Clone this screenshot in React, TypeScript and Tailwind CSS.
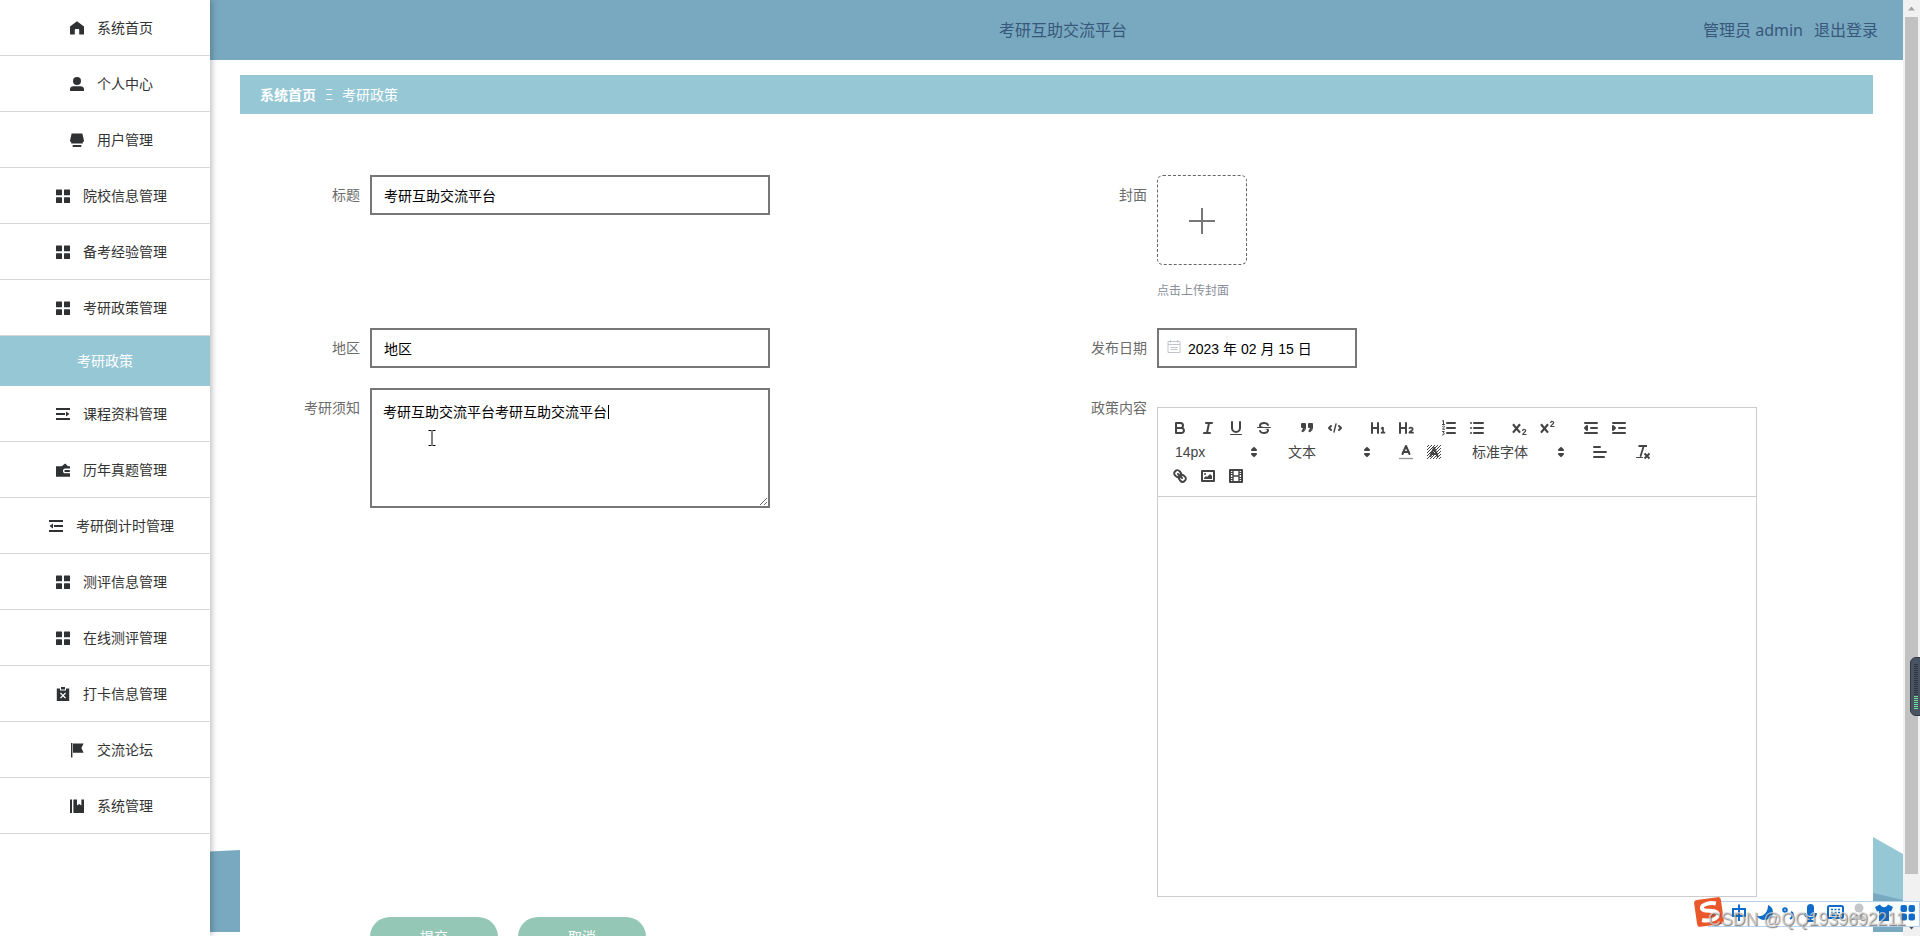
import type { ReactNode } from "react";

/* ── Sidebar icons, drawn on a 14px grid ─────────────────────────── */

const ICONS: Record<string, ReactNode> = {
  home: <path d="M7 0.2L0 5.6V13.6H4.8V9C4.8 8.4 5.2 8 5.700 8H8.300C8.800 8 9.200 8.400 9.200 9V13.600H14V5.600Z" />,
  user: (
    <>
      <circle cx="7" cy="4" r="4" />
      <path d="M0 14V12.300C0 10.400 1.400 9.200 3.400 9.200H10.600C12.600 9.200 14 10.400 14 12.300V14Z" />
    </>
  ),
  shop: (
    <>
      <path d="M1.600 0.500H12.400L14 7.800C13.900 8.700 13.400 9 12.800 9V10.600H1.200V9C0.600 9 0.100 8.700 0 7.800Z" />
      <path d="M2.600 12H11.400V13C11.400 13.500 11.100 14 10.400 14H3.600C2.900 14 2.600 13.500 2.600 13Z" />
    </>
  ),
  grid: (
    <>
      <rect x="0" y="0.400" width="6" height="5.800" rx="0.500" />
      <rect x="8" y="0.400" width="6" height="5.800" rx="0.500" />
      <rect x="0" y="8.200" width="6" height="5.800" rx="0.500" />
      <rect x="8" y="8.200" width="6" height="5.800" rx="0.500" />
    </>
  ),
  unfold: <path d="M0 1H14V3H0ZM0 6H9V8H0ZM10 4.500L13.500 7L10 9.500ZM0 11H14V13H0Z" />,
  fold: <path d="M0 1H14V3H0ZM5 6H14V8H5ZM4 4.500L0.500 7L4 9.500ZM0 11H14V13H0Z" />,
  wallet: (
    <path d="M0 3.200H5.600L9.200 0.400L12 3.200H14V5.600H9.400C7.600 5.600 7 6.900 7 8C7 9.400 7.800 10.300 9.400 10.300H14V13.800H0ZM9.400 7H13.800V9H9.400C8.600 9 8.400 8.500 8.400 8S8.600 7 9.400 7Z" />
  ),
  release: (
    <path
      fillRule="evenodd"
      d="M0.800 1.600H4V3.400H10V1.600H13.200V14H0.800ZM5 0H9V2.400H5ZM4.900 5.600L4 6.500L6.100 8.600L4 10.700L4.900 11.600L7 9.500L9.100 11.600L10 10.700L7.900 8.600L10 6.500L9.100 5.600L7 7.700Z"
    />
  ),
  flag: <path d="M1 0H2.400V14.600H1ZM3 0.600H13.600L11.400 5.100L13.600 9.800H3Z" />,
  books: <path d="M0 0.400H2V14H0ZM3.400 0.400H7V6.600L9.200 5L11.400 6.600V0.400H14V14H3.400Z" />,
};

const MENU = [
  { icon: "home", label: "系统首页" },
  { icon: "user", label: "个人中心" },
  { icon: "shop", label: "用户管理" },
  { icon: "grid", label: "院校信息管理" },
  { icon: "grid", label: "备考经验管理" },
  { icon: "grid", label: "考研政策管理", child: "考研政策" },
  { icon: "unfold", label: "课程资料管理" },
  { icon: "wallet", label: "历年真题管理" },
  { icon: "fold", label: "考研倒计时管理" },
  { icon: "grid", label: "测评信息管理" },
  { icon: "grid", label: "在线测评管理" },
  { icon: "release", label: "打卡信息管理" },
  { icon: "flag", label: "交流论坛" },
  { icon: "books", label: "系统管理" },
];

function Sidebar() {
  return (
    <aside className="relative z-10 w-[210px] shrink-0 bg-white shadow-[2px_0_6px_rgba(0,0,0,0.25)]">
      <ul>
        {MENU.map((m) => (
          <li key={m.label}>
            <div className="flex h-14 items-center justify-center gap-[13px] border-b border-[#d6d6d6] pl-[13px] text-[#333]">
              <svg className="h-3.5 w-3.5 shrink-0 overflow-visible" viewBox="0 0 14 14" fill="#303133">
                {ICONS[m.icon]}
              </svg>
              <span>{m.label}</span>
            </div>
            {m.child && (
              <div className="flex h-[50px] items-center justify-center bg-[#96c7d5] text-white">{m.child}</div>
            )}
          </li>
        ))}
      </ul>
    </aside>
  );
}

/* ── Rich text editor toolbar ────────────────────────────────────── */

function Tool({ children }: { children: ReactNode }) {
  return (
    <button className="flex h-6 w-7 items-center justify-center">
      <svg
        className="h-[18px] w-[18px]"
        viewBox="0 0 18 18"
        fill="none"
        stroke="#444"
        strokeWidth="2"
        strokeLinecap="round"
        strokeLinejoin="round"
      >
        {children}
      </svg>
    </button>
  );
}

function Group({ children }: { children: ReactNode }) {
  return <span className="mr-[15px] flex">{children}</span>;
}

function Picker({ label, className }: { label: string; className: string }) {
  return (
    <span className={`mr-[15px] flex h-6 items-center justify-between pl-[9px] pr-px text-[#444] ${className}`}>
      {label}
      <svg className="h-[18px] w-[18px]" viewBox="0 0 18 18" fill="#444" stroke="#444" strokeWidth="2" strokeLinejoin="round">
        <polygon points="7 11 9 13 11 11 7 11" />
        <polygon points="7 7 9 5 11 7 7 7" />
      </svg>
    </span>
  );
}

const solid = { fill: "#444", stroke: "none" };

// Diagonal hatch behind the letter of the background colour tool
const HATCH = [-14, -11, -8, -5, -2, 1, 4, 7, 10, 13];

function Toolbar() {
  return (
    <div className="h-[89px] border-b border-[#ccc] p-2">
      <div className="flex">
        <Group>
          <Tool>
            <path d="M5,4H9.5A2.5,2.5,0,0,1,12,6.5v0A2.5,2.5,0,0,1,9.5,9H5A0,0,0,0,1,5,9V4A0,0,0,0,1,5,4Z" />
            <path d="M5,9h5.5A2.5,2.5,0,0,1,13,11.5v0A2.5,2.5,0,0,1,10.5,14H5a0,0,0,0,1,0,0V9A0,0,0,0,1,5,9Z" />
          </Tool>
          <Tool>
            <path d="M7 4H13M5 14H11M8 14L10 4" />
          </Tool>
          <Tool>
            <path d="M5,3V9a4.012,4.012,0,0,0,4,4H9a4.012,4.012,0,0,0,4-4V3" />
            <rect {...solid} x="3" y="15" width="12" height="1" rx="0.5" />
          </Tool>
          <Tool>
            <path strokeWidth="1" d="M15.5 8.5H2.5" />
            <path
              {...solid}
              d="M9.007,8C6.542,7.791,6,7.519,6,6.5,6,5.792,7.283,5,9,5c1.571,0,2.765.679,2.969,1.309a1,1,0,0,0,1.9-.617C13.356,4.106,11.354,3,9,3,6.2,3,4,4.538,4,6.5a3.2,3.2,0,0,0,.5,1.843Z"
            />
            <path
              {...solid}
              d="M8.984,10C11.457,10.208,12,10.479,12,11.5c0,0.708-1.283,1.5-3,1.5-1.571,0-2.765-.679-2.969-1.309a1,1,0,1,0-1.9.617C4.644,13.894,6.646,15,9,15c2.8,0,5-1.538,5-3.5a3.2,3.2,0,0,0-.5-1.843Z"
            />
          </Tool>
        </Group>
        <Group>
          <Tool>
            <rect fill="#444" x="4" y="5" width="3" height="3" />
            <rect fill="#444" x="11" y="5" width="3" height="3" />
            <path {...solid} d="M7,8c0,4.031-3,5-3,5l-.8-1.2S5,11,5,8Z" />
            <path {...solid} d="M14,8c0,4.031-3,5-3,5l-.8-1.2S12,11,12,8Z" />
            <path strokeWidth="1.2" d="M7.4 8c0 3.5-2.8 4.6-2.8 4.6M14.4 8c0 3.5-2.8 4.6-2.8 4.6" />
          </Tool>
          <Tool>
            <polyline points="5 7 3 9 5 11" />
            <polyline points="13 7 15 9 13 11" />
            <line strokeWidth="1.4" x1="10" x2="8" y1="5" y2="13" />
          </Tool>
        </Group>
        <Group>
          <Tool>
            <path d="M3 4V14M9 4V14M3 9H9" />
            <path strokeWidth="1.700" strokeLinecap="butt" d="M12 9.800L14 8.600V14M11.800 13.600H16.200" />
          </Tool>
          <Tool>
            <path d="M3 4V14M9 4V14M3 9H9" />
            <path strokeWidth="1.700" strokeLinecap="butt" d="M12 9.600C12.600 8.200 15.800 8.200 15.800 10C15.800 11.400 13 12.200 12.400 13.600H16.800" />
          </Tool>
        </Group>
        <Group>
          <Tool>
            <path d="M7 4H15M7 9H15M7 14H15" />
            <path strokeWidth="1" d="M2.5 1.9L3.5 1.5V5.5M2.5 5.5H4.5M2.5 7.4C3 6.6 4.6 6.8 4.5 7.8C4.4 8.6 2.5 9.6 2.5 10.2H4.6M2.5 12.5H4.2L3.3 14C4.6 14 4.9 15.9 2.5 16" />
          </Tool>
          <Tool>
            <path d="M6 4H15M6 9H15M6 14H15M3 4H3M3 9H3M3 14H3" />
          </Tool>
        </Group>
        <Group>
          <Tool>
            <path strokeWidth="2.2" strokeLinecap="butt" d="M2 5.200L9 13.600M9 5.200L2 13.600" />
            <path strokeWidth="1.2" d="M11.7 11.5C12.2 10 14.8 10.2 14.6 11.8C14.4 13.1 11.9 14.2 11.7 15.5H15" />
          </Tool>
          <Tool>
            <path strokeWidth="2.2" strokeLinecap="butt" d="M2 5.200L9 13.600M9 5.200L2 13.600" />
            <path strokeWidth="1.2" d="M11.7 3.5C12.2 2 14.8 2.2 14.6 3.8C14.4 5.1 11.9 6.2 11.7 7.5H15" />
          </Tool>
        </Group>
        <Group>
          <Tool>
            <path d="M3 14H15M3 4H15M9 9H15" />
            <polyline fill="#444" points="5 7 5 11 3 9 5 7" />
          </Tool>
          <Tool>
            <path d="M3 14H15M3 4H15M9 9H15" />
            <polyline fill="#444" points="3 7 3 11 5 9 3 7" />
          </Tool>
        </Group>
      </div>

      <div className="flex">
        <Picker label="14px" className="w-[98px]" />
        <Picker label="文本" className="w-[98px]" />
        <Group>
          <Tool>
            <path stroke="#999" strokeWidth="1.4" strokeLinecap="butt" d="M2 15.5H16" />
            <polyline points="5.5 11 9 3 12.5 11" />
            <path d="M6.4 9H11.6" />
          </Tool>
          <Tool>
            <clipPath id="hatch-box">
              <rect x="2" y="2" width="14" height="14" />
            </clipPath>
            <g clipPath="url(#hatch-box)" strokeWidth="1">
              {HATCH.map((x) => (
                <line key={x} x1={x} y1="17" x2={x + 16} y2="1" />
              ))}
            </g>
            <polyline points="5.5 13 9 5 12.5 13" />
            <path d="M6.4 11H11.6" />
          </Tool>
        </Group>
        <Picker label="标准字体" className="w-[108px]" />
        <Group>
          <Tool>
            <path d="M3 9H15M3 14H13M3 4H9" />
          </Tool>
        </Group>
        <Group>
          <Tool>
            <path strokeLinecap="butt" d="M4.500 3H13" />
            <path strokeWidth="1.8" d="M6.600 13L9.4 4" />
            <path strokeLinecap="butt" d="M10.500 10.500L15.500 15.500M15.500 10.500L10.500 15.500" />
            <rect {...solid} x="2" y="14" width="7" height="1" rx="0.5" />
          </Tool>
        </Group>
      </div>

      <div className="flex">
        <Tool>
          <line x1="7" x2="11" y1="7" y2="11" />
          <path d="M8.9,4.577a3.476,3.476,0,0,1,.36,4.679A3.476,3.476,0,0,1,4.577,8.9C3.185,7.5,2.035,6.4,4.217,4.217S7.5,3.185,8.9,4.577Z" />
          <path d="M13.423,9.1a3.476,3.476,0,0,0-4.679-.36,3.476,3.476,0,0,0,.36,4.679c1.392,1.392,2.5,2.542,4.679.36S14.815,10.5,13.423,9.1Z" />
        </Tool>
        <Tool>
          <rect x="3" y="4" width="12" height="10" />
          <circle {...solid} cx="6" cy="7" r="1" />
          <polyline {...solid} points="5 12 5 11 7 9 8 10 11 7 13 9 13 12 5 12" />
        </Tool>
        <Tool>
          <rect x="3" y="3" width="12" height="12" />
          <path strokeWidth="1.4" strokeLinecap="butt" d="M6 3V15M12 3V15M6 9H12" />
          <path strokeWidth="1" strokeLinecap="butt" d="M3 5.5H6M3 7.5H6M3 10.5H6M3 12.5H6M12 5.5H15M12 7.5H15M12 10.5H15M12 12.5H15" />
        </Tool>
      </div>
    </div>
  );
}

/* ── Form ────────────────────────────────────────────────────────── */

function Field({ label, children }: { label: string; children: ReactNode }) {
  return (
    <div className="flex w-[787px] shrink-0">
      <label className="mr-2.5 h-10 w-[120px] shrink-0 text-right leading-10 text-[#6b6b6b]">{label}</label>
      {children}
    </div>
  );
}

function PolicyForm() {
  return (
    <form className="pt-[61px]">
      <div className="flex h-[153px]">
        <Field label="标题">
          <input className="h-10 w-[400px] border-2 border-[#777] px-3 text-black" defaultValue="考研互助交流平台" />
        </Field>
        <Field label="封面">
          <div>
            <div className="flex h-[90px] w-[90px] items-center justify-center rounded-md border border-dashed border-[#666] pr-px pt-0.5">
              <svg className="h-[26px] w-[26px]" viewBox="0 0 26 26" stroke="#777" strokeWidth="2">
                <path d="M13 0V26M0 13H26" />
              </svg>
            </div>
            <p className="mt-[18px] text-xs leading-4 text-[#888e99]">点击上传封面</p>
          </div>
        </Field>
      </div>

      <div className="flex h-[60px]">
        <Field label="地区">
          <input className="h-10 w-[400px] border-2 border-[#777] px-3 text-black" defaultValue="地区" />
        </Field>
        <Field label="发布日期">
          <div className="flex h-10 w-[200px] items-center border-2 border-[#777] pl-2 pt-px text-black">
            <svg className="mb-1 mr-[7px] h-3.5 w-3.5" viewBox="0 0 14 14" fill="none" stroke="#c0c4cc">
              <path d="M1 1.5H13V12.5H1ZM1 4.5H13M3.5 0V2.5M10.5 0V2.5M3.5 7.5H10.5M3.5 9.5H10.5" />
            </svg>
            2023 年 02 月 15 日
          </div>
        </Field>
      </div>

      <div className="flex h-[529px]">
        <Field label="考研须知">
          <div className="relative h-[120px]">
            <textarea
              className="h-[120px] w-[400px] resize border-2 border-[#777] px-[11px] py-3 leading-[21px] text-black"
              defaultValue="考研互助交流平台考研互助交流平台"
            />
            {/* text caret and mouse pointer */}
            <span className="absolute left-[238px] top-[17px] h-[14px] w-px bg-black" />
            <svg className="absolute left-[58px] top-[42px] h-4 w-2" viewBox="0 0 8 16" fill="none" stroke="#000">
              <path d="M0.5 0.5H3.5M4.5 0.5H7.5M4 1V15M0.5 15.5H3.5M4.5 15.5H7.5" />
            </svg>
          </div>
        </Field>
        <Field label="政策内容">
          <div className="mt-[19px] h-[490px] w-[600px] border border-[#ccc]">
            <Toolbar />
          </div>
        </Field>
      </div>

      <div className="ml-[130px] flex gap-5">
        <button className="h-10 w-32 shrink-0 rounded-[20px] bg-[#94c7b5] text-white">提交</button>
        <button className="h-10 w-32 shrink-0 rounded-[20px] bg-[#94c7b5] text-white">取消</button>
      </div>
    </form>
  );
}

/* ── Desktop overlays ────────────────────────────────────────────── */

function ImeBar() {
  return (
    <div className="absolute left-[1694px] top-[897px] z-30 h-[31px] w-[226px]">
      <div className="absolute left-[14px] top-1 h-[26px] w-[212px] border border-[#b5d3ee] bg-white/95" />
      <svg className="absolute inset-0 h-[31px] w-[226px]" viewBox="0 0 226 31" fill="none">
        <g transform="rotate(-8 15 15)">
          <rect x="1.500" y="1.500" width="27" height="27" rx="3" fill="#e9572b" />
          <path
            d="M23 7.500C18 5.600 8.500 6 8.500 10.300C8.500 15 23.500 12.500 23.500 18.600C23.500 23.600 12.500 24.300 7 22"
            stroke="#fff"
            strokeWidth="4"
          />
        </g>
        <g stroke="#0f6cc9" strokeWidth="2">
          <path d="M39 12H51V19H39ZM45 7.500V24" />
          <circle cx="91" cy="13" r="1.800" />
          <path d="M97 15C99.500 16 99.500 20 96 22" />
          <path d="M111 16C111 22.500 122 22.500 122 16M116.500 21V24M113 24H120" />
          <rect x="134" y="9" width="15" height="12" rx="1.500" />
          <path strokeWidth="1.500" d="M137 12.500H139M140.500 12.500H142.500M144 12.500H146M137 15.500H139M140.500 15.500H142.500M144 15.500H146M138 18.500H145" />
        </g>
        <g fill="#0f6cc9">
          <path d="M74 8C82 11 80 23 70 23C67 23 64 21 63 19C69 20 74 16 74 8Z" />
          <rect x="113" y="7" width="7" height="12" rx="3.500" />
          <path d="M181 10L186 7.500C188 11 192 11 194 7.500L199 10L197 14.500L195 14V24H185V14L183 14.500Z" />
          <rect x="206.500" y="8" width="6.500" height="7" rx="2" />
          <rect x="214.500" y="8" width="6.500" height="7" rx="2" />
          <rect x="206.500" y="16.500" width="6.500" height="7" rx="2" />
          <rect x="214.500" y="16.500" width="6.500" height="7" rx="2" />
        </g>
        <g fill="#c4c6c9">
          <circle cx="165" cy="11" r="4.500" />
          <path d="M158 23C158 16 172 16 172 23Z" />
        </g>
      </svg>
      <span className="absolute left-[14px] top-[10px] whitespace-nowrap font-['Liberation_Sans',sans-serif] text-[17.7px] leading-6 text-[#dcdcdc]/70 [text-shadow:1px_1px_1px_rgba(80,80,80,0.75)]">
        CSDN @QQ1939692211
      </span>
    </div>
  );
}

function Scrollbar() {
  return (
    <div className="flex w-[17px] shrink-0 flex-col items-center justify-between bg-[#f1f1f1]">
      <svg className="h-[17px] w-[17px]" viewBox="0 0 17 17" fill="#a3a3a3">
        <path d="M8.5 6.5L12 10.5H5Z" />
      </svg>
      <div className="mb-auto h-[857px] w-[13px] bg-[#c1c1c1]" />
      <svg className="h-[17px] w-[17px]" viewBox="0 0 17 17" fill="#505050">
        <path d="M8.5 10.5L12 6.5H5Z" />
      </svg>
    </div>
  );
}

export default function App() {
  return (
    <div className="relative flex h-[936px] w-[1920px] overflow-hidden bg-white font-['Liberation_Sans','Noto_Sans_CJK_SC',sans-serif] text-sm">
      <Sidebar />

      <div className="relative flex w-[1693px] shrink-0 flex-col">
        {/* decorative waves behind the content */}
        <svg className="absolute left-0 top-[830px] h-[106px] w-[1693px]" viewBox="0 0 1693 106">
          <path d="M0 21.5L30 20V102H0Z" fill="#78a9c1" />
          <path d="M1663 7L1693 24V102H1663Z" fill="#96c7d5" />
          <path d="M1663 63L1693 70V102H1663Z" fill="#78a9c1" />
        </svg>

        <header className="flex h-[60px] shrink-0 items-center justify-between bg-[#78a9c1] pl-[789px] pr-[25px] font-['Noto_Sans','Noto_Sans_CJK_SC',sans-serif] text-base text-[#38587a]">
          <h1>考研互助交流平台</h1>
          <div className="flex gap-[11px]">
            <span>管理员 admin</span>
            <span>退出登录</span>
          </div>
        </header>

        <main className="px-[30px] pt-[15px]">
          <nav className="flex h-[39px] items-center bg-[#96c7d5] pl-5 text-white">
            <span className="font-bold">系统首页</span>
            <span className="w-[26px] text-center font-['Noto_Sans',sans-serif] font-light">Ξ</span>
            <span>考研政策</span>
          </nav>
          <PolicyForm />
        </main>
      </div>

      <Scrollbar />
      <ImeBar />

      {/* volume meter docked at the screen edge */}
      <div className="absolute left-[1910px] top-[657px] z-20 flex h-[59px] w-3 flex-col items-start gap-px rounded-l-md border border-[#303846] bg-[#4a5362] pl-[3px] pt-1.5">
        {Array.from({ length: 16 }, (_, i) => (
          <span key={i} className="h-px w-1 bg-[#2b3340]" />
        ))}
        {Array.from({ length: 7 }, (_, i) => (
          <span key={i} className="h-px w-1 bg-[#6fe09a]" />
        ))}
      </div>
    </div>
  );
}
